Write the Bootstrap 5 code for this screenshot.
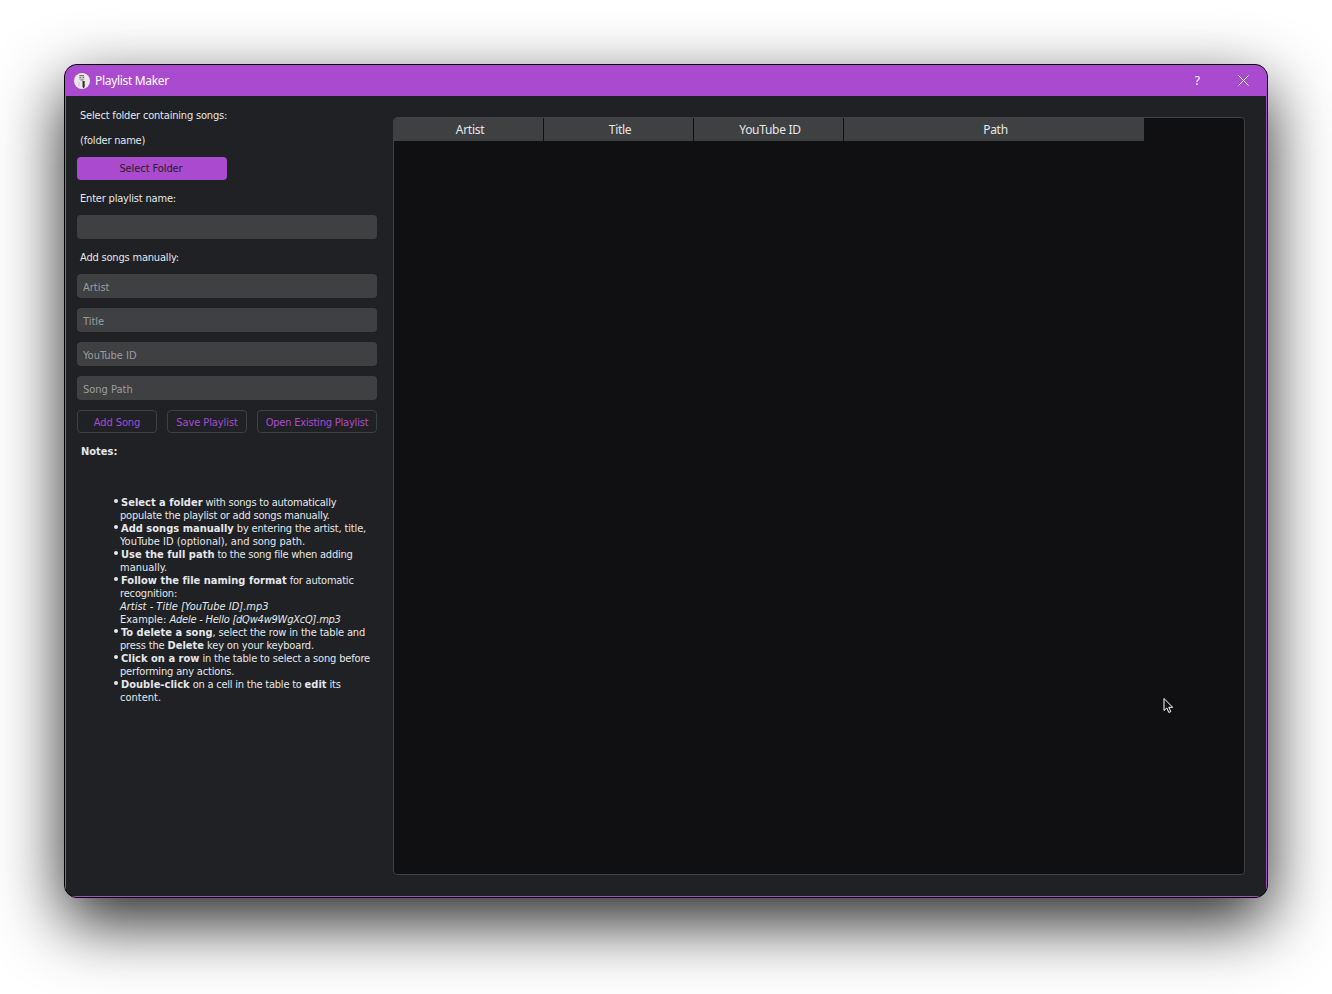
<!DOCTYPE html>
<html lang="en" data-bs-theme="dark">
<head>
<meta charset="utf-8">
<meta name="viewport" content="width=device-width, initial-scale=1">
<title>Playlist Maker</title>
<link href="https://cdn.jsdelivr.net/npm/bootstrap@5.3.0/dist/css/bootstrap.min.css" rel="stylesheet">
<style>
  body { background: #fff; color: #e4e7eb; font: 11px/15px "DejaVu Sans Condensed", "DejaVu Sans", sans-serif; font-stretch: condensed; height: 994px; padding: 64px 64px 96px; overflow: hidden; }
  .window-shell { width: 1204px; height: 834px; border: 1px solid #000; border-radius: 13px; overflow: hidden; box-shadow: 0 24px 66px rgba(0,0,0,.86); background: #000; }
  .app-window { background: #202124; border: 1px solid #aa4acf; width: 1202px; height: 832px; }
  .title-bar { background: #aa4acf; height: 30px; padding-left: 8px; padding-right: 17px; color: #fff; font: 12px/30px "Noto Sans", sans-serif; }
  .title-text { letter-spacing: -.32px; margin-left: 5px; }
  .title-actions { gap: 38px; }
  .title-actions svg { margin-top: -2px; }
  .side-panel { width: 300px; margin: 11px 16px 0 11px; gap: 10px; }
  .side-panel label, .side-panel .caption-line { height: 15px; padding: 1px 0 0 3px; white-space: nowrap; letter-spacing: -.19px; }
  .side-panel .notes-title { letter-spacing: 0; padding-left: 4px; }
  .side-panel .form-control { height: 24px; min-height: 0; padding: 2px 6px 0; border: 0; border-radius: 4px; background: #3f4042; font-size: 11px; line-height: 22px; color: #e4e7eb; }
  .side-panel .form-control::placeholder { color: #9b9c9e; opacity: 1; }
  .side-panel .btn { height: 23px; padding: 2px 0 0; font-size: 11px; line-height: 20px; border-radius: 4px; white-space: nowrap; letter-spacing: -.08px; }
  .side-panel .btn-solid { width: 150px; background: #aa4acf; color: #202124; padding: 1px 2px 0 0; }
  .side-panel .btn-line { width: 80px; border: 1px solid #3f4042; color: #aa4acf; }
  .side-panel .btn-wide { width: 120px; letter-spacing: -.2px; }
  .notes-list { margin: 28px 0 0; padding-left: 43px; line-height: 13px; white-space: nowrap; letter-spacing: -.16px; }
  .notes-list li { list-style: none; position: relative; }
  .notes-list li::before { content: ""; position: absolute; left: -6px; top: 3px; width: 4px; height: 4px; border-radius: 50%; background: #e4e7eb; }
  .notes-list b { letter-spacing: .02px; }
  .notes-list li > b:first-child { margin-left: 1px; }
  .notes-list .ls-tight { letter-spacing: -.22px; }
  .notes-list .ls-none { letter-spacing: 0; }
  .song-table { width: 852px; height: 758px; margin-top: 21px; border: 1px solid #3f4042; border-radius: 4px; background: #101012; overflow: hidden; }
  .song-table table { table-layout: fixed; width: 750px; border-collapse: separate; border-spacing: 0; font: 12px/23px "Noto Sans", sans-serif; letter-spacing: -.3px; }
  .song-table th { height: 23px; padding: 0 0 0 3px; font-weight: 400; text-align: center; background: #3f4042; border-right: 1px solid #101012; }
  .song-table th:last-child { border-right: 0; }
  .pointer { position: absolute; left: 1163px; top: 697px; }
</style>
<script src="https://cdn.jsdelivr.net/npm/bootstrap@5.3.0/dist/js/bootstrap.bundle.min.js"></script>
</head>
<body>
<div class="window-shell">
<main class="app-window d-flex flex-column">
  <header class="title-bar d-flex align-items-center justify-content-between">
    <div class="d-flex align-items-center">
      <svg width="16" height="16" viewBox="0 0 16 16" aria-hidden="true"><circle cx="8" cy="8" r="8" fill="#eee9e9"/><path d="M5 2h5.500v5H5z" fill="#cfcaca"/><path d="M5.500 2.500h4.500M5.500 4.500h1.500M8.500 4.500h1.500M6.500 7h3" stroke="#777172"/><path d="M8.500 8h2.200v6L9.500 15.500l-1-2z" fill="#35303a"/><path d="M5 9v4" stroke="#c4bfc0"/></svg>
      <span class="title-text">Playlist Maker</span>
    </div>
    <div class="title-actions d-flex align-items-center"><span>?</span>
      <svg width="11" height="11" viewBox="0 0 11 11" aria-hidden="true"><path d="M.5.5l10 10M10.500.5l-10 10" stroke="#fff" stroke-width="1"/></svg>
    </div>
  </header>
  <div class="d-flex flex-grow-1">
    <form class="side-panel d-flex flex-column flex-shrink-0">
      <div class="caption-line">Select folder containing songs:</div>
      <div class="caption-line">(folder name)</div>
      <button type="button" class="btn btn-solid">Select Folder</button>
      <label for="plname">Enter playlist name:</label>
      <input id="plname" class="form-control">
      <div class="caption-line">Add songs manually:</div>
      <input class="form-control" placeholder="Artist">
      <input class="form-control" placeholder="Title">
      <input class="form-control" placeholder="YouTube ID">
      <input class="form-control" placeholder="Song Path">
      <div class="d-flex justify-content-between">
        <button type="button" class="btn btn-line">Add Song</button>
        <button type="button" class="btn btn-line">Save Playlist</button>
        <button type="button" class="btn btn-line btn-wide">Open Existing Playlist</button>
      </div>
      <div class="caption-line notes-title"><b>Notes:</b></div>
      <ul class="notes-list">
        <li><b>Select a folder</b><span class="ls-tight"> with songs to automatically<br>populate the playlist or add songs manually.</span></li>
        <li><b>Add songs manually</b> by entering the artist, title,<br><span class="ls-none">YouTube ID (optional), and song path.</span></li>
        <li><b>Use the full path</b><span class="ls-tight"> to the song file when adding</span><br><span class="ls-none">manually.</span></li>
        <li><b>Follow the file naming format</b><span class="ls-tight"> for automatic</span><br>recognition:<br><i class="ls-none">Artist - Title [YouTube ID].mp3</i><br><span class="ls-none">Example: </span><i class="ls-tight">Adele - Hello [dQw4w9WgXcQ].mp3</i></li>
        <li><b>To delete a song</b>, select the row in the table and<br>press the <b>Delete</b> key on your keyboard.</li>
        <li><b>Click on a row</b> in the table to select a song before<br>performing any actions.</li>
        <li><b>Double-click</b><span class="ls-tight"> on a cell in the table to </span><b>edit</b><span class="ls-tight"> its</span><br><span class="ls-none">content.</span></li>
      </ul>
    </form>
    <section class="song-table">
      <table>
        <colgroup><col style="width:150px"><col style="width:150px"><col style="width:150px"><col style="width:300px"></colgroup>
        <thead><tr><th>Artist</th><th>Title</th><th>YouTube ID</th><th>Path</th></tr></thead>
      </table>
    </section>
  </div>
</main>
</div>
<svg class="pointer" width="12" height="18" viewBox="0 0 12 18" aria-hidden="true"><path d="M1 1.500v12l2.800-2.500 2 4.500 2-.9-2-4.300h3.900z" fill="#101012" stroke="#fff" stroke-width="1"/></svg>
</body>
</html>
